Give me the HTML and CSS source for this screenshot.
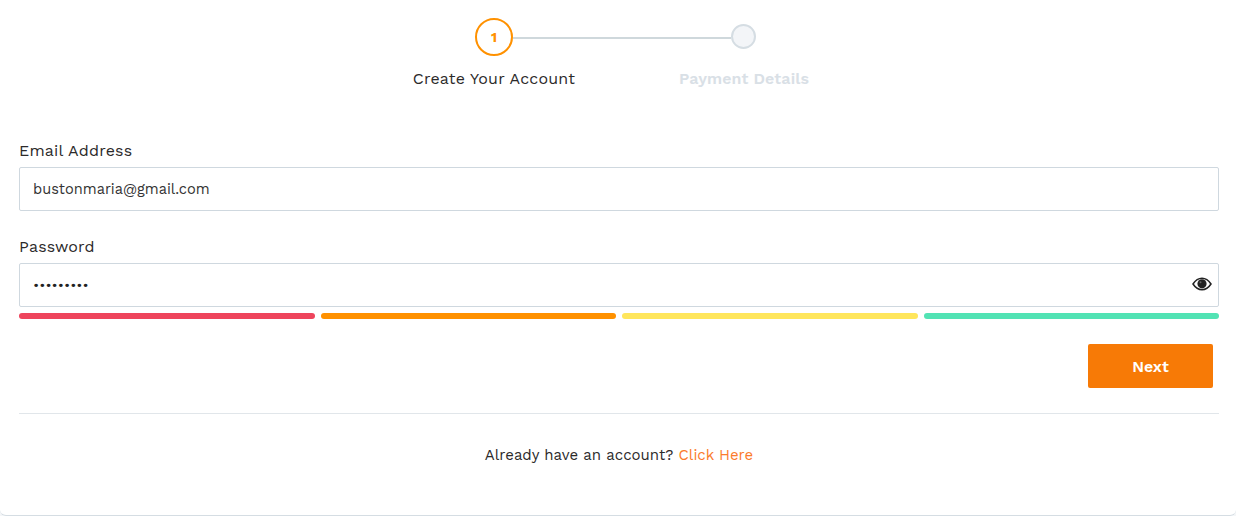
FILE: index.html
```html
<!DOCTYPE html>
<html lang="en">

<head>
  <meta charset="UTF-8">
  <meta name="viewport" content="width=device-width, initial-scale=1.0">
  <title>Create Your Account</title>
  <link rel="stylesheet" href="styles.css">
</head>

<body>
  <div class="card">
    <div class="stepper">
      <div class="step step-active">
        <div class="step-circle">1</div>
        <div class="step-label">Create Your Account</div>
      </div>
      <div class="step step-next">
        <div class="step-circle"></div>
        <div class="step-label">Payment Details</div>
      </div>
    </div>

    <form class="form">
      <label class="field-label">Email Address</label>
      <div class="input">bustonmaria@gmail.com</div>

      <label class="field-label field-label-password">Password</label>
      <div class="input input-password">
        <span class="dots">•••••••••</span>
        <svg class="eye" viewBox="0 0 20 14" width="20" height="14">
          <path fill="none" stroke="#222" stroke-width="1.500" d="M1 7C3.500 3.200 6.500 1.300 10 1.300S16.500 3.200 19 7c-2.500 3.800-5.500 5.700-9 5.700S3.500 10.800 1 7z"/>
          <circle fill="#222" cx="10" cy="6.800" r="4.600"/>
          <circle fill="#666" cx="8.500" cy="5.300" r="1"/>
        </svg>
      </div>

      <div class="strength">
        <span class="bar bar-red"></span>
        <span class="bar bar-orange"></span>
        <span class="bar bar-yellow"></span>
        <span class="bar bar-green"></span>
      </div>

      <div class="actions">
        <button type="button" class="next-button">Next</button>
      </div>
    </form>

    <div class="login-note">Already have an account? <a href="#">Click Here</a></div>
  </div>
</body>

</html>
```

FILE: styles.css
```css
* {
  box-sizing: border-box;
}

body {
  margin: 0;
  background-color: #f4f6f8;
  font-family: "Work Sans", "Inter", "Liberation Sans", sans-serif;
  color: #2c2a2a;
}

.card {
  height: 516px;
  background-color: #fff;
  border-bottom: 1px solid #d5dde3;
  border-radius: 0 0 6px 6px;
  padding: 18px 17px 0 19px;
}

/* stepper */
.stepper {
  display: flex;
  justify-content: center;
  height: 71px;
}

.step {
  position: relative;
  width: 250px;
  display: flex;
  flex-direction: column;
  align-items: center;
}

/* line between the two circles */
.step-active::after {
  content: "";
  position: absolute;
  top: 19px;
  left: 144px;
  width: 218px;
  height: 2px;
  background-color: #cfd8dc;
}

.step-circle {
  width: 38px;
  height: 38px;
  border-radius: 50%;
  border: 2px solid #ff9100;
  color: #ff9100;
  font-size: 14px;
  font-weight: 700;
  display: flex;
  align-items: center;
  justify-content: center;
}

.step-next .step-circle {
  position: relative;
  width: 25px;
  height: 25px;
  margin: 6px 1px 7px 0;
  border-color: #d5dde3;
  background-color: #f3f5f8;
}

.step-label {
  margin-top: 13px;
  font-size: 16px;
  font-weight: 400;
  letter-spacing: 0.2px;
  line-height: 19px;
  white-space: nowrap;
}

.step-next .step-label {
  color: #d9e0e6;
  font-weight: 600;
  letter-spacing: 0.1px;
}

/* form */
.form {
  margin-top: 52px;
  border-bottom: 1px solid #e1e6ea;
  padding-bottom: 25px;
}

.field-label {
  display: block;
  height: 19px;
  font-size: 16px;
  font-weight: 400;
  letter-spacing: 0.2px;
  line-height: 19px;
}

.field-label-password {
  margin-top: 26px;
}

.input {
  height: 44px;
  margin-top: 7px;
  padding: 0 13px;
  border: 1px solid #cfd8df;
  border-radius: 2px;
  font-size: 14.6px;
  line-height: 42px;
  color: #333;
}

.input-password {
  position: relative;
}

.dots {
  font-size: 14.4px;
  color: #222;
}

.eye {
  position: absolute;
  top: 13px;
  right: 6px;
}

.strength {
  display: flex;
  gap: 6px;
  margin-top: 6px;
}

.bar {
  flex: 1;
  height: 6px;
  border-radius: 3px;
}

.bar-red {
  background-color: #ee445c;
}

.bar-orange {
  background-color: #ff9100;
}

.bar-yellow {
  background-color: #ffe65c;
}

.bar-green {
  background-color: #52e3b4;
}

.actions {
  display: flex;
  justify-content: flex-end;
  margin-top: 25px;
  padding-right: 6px;
}

.next-button {
  width: 125px;
  height: 44px;
  border: 0;
  border-radius: 2px;
  background-color: #f77a06;
  color: #fff;
  font-family: inherit;
  font-size: 16px;
  font-weight: 600;
}

.login-note {
  margin-top: 32px;
  text-align: center;
  font-size: 15px;
}

.login-note a {
  color: #fb7b2c;
  text-decoration: none;
}
```
